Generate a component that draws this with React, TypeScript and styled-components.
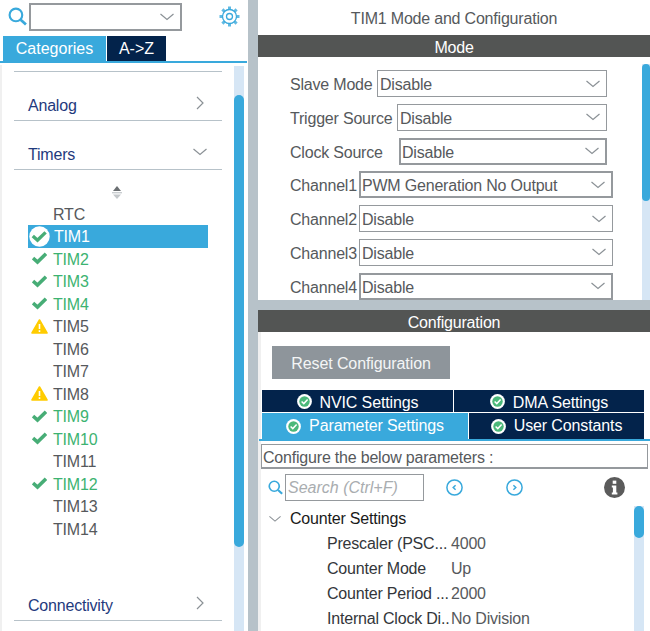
import styled, { createGlobalStyle } from 'styled-components';

const BLUE = '#39a9dc';
const NAVY = '#03234b';
const GREEN = '#3cb371';
const CHECK = '#47ad76';

const GlobalStyle = createGlobalStyle`
  html, body { margin: 0; padding: 0; background: #fff; }
  body {
    font-family: "Liberation Sans", Arial, sans-serif;
    font-size: 16px;
    letter-spacing: -0.2px;
    color: #56595c;
  }
`;

const timers = [
  { name: 'RTC' },
  { name: 'TIM1', status: 'selected' },
  { name: 'TIM2', status: 'ok' },
  { name: 'TIM3', status: 'ok' },
  { name: 'TIM4', status: 'ok' },
  { name: 'TIM5', status: 'warn' },
  { name: 'TIM6' },
  { name: 'TIM7' },
  { name: 'TIM8', status: 'warn' },
  { name: 'TIM9', status: 'ok' },
  { name: 'TIM10', status: 'ok' },
  { name: 'TIM11' },
  { name: 'TIM12', status: 'ok' },
  { name: 'TIM13' },
  { name: 'TIM14' },
];

const modes = [
  { label: 'Slave Mode', value: 'Disable', left: 377, right: 607 },
  { label: 'Trigger Source', value: 'Disable', left: 397, right: 607 },
  { label: 'Clock Source', value: 'Disable', left: 399, right: 607, heavy: true },
  { label: 'Channel1', value: 'PWM Generation No Output', left: 359, right: 613, heavy: true },
  { label: 'Channel2', value: 'Disable', left: 359, right: 613 },
  { label: 'Channel3', value: 'Disable', left: 359, right: 613 },
  { label: 'Channel4', value: 'Disable', left: 359, right: 613, heavy: true },
];

const params = [
  { label: 'Prescaler (PSC...', value: '4000' },
  { label: 'Counter Mode', value: 'Up' },
  { label: 'Counter Period ...', value: '2000' },
  { label: 'Internal Clock Di..', value: 'No Division' },
];

const Chevron = ({ dir = 'down', size = 14 }: { dir?: 'down' | 'right'; size?: number }) => (
  <svg width={size} height={size} viewBox="0 0 14 14" fill="none" stroke="#8b9196" strokeWidth="1.2">
    {dir === 'down' ? <path d="M0.5 4 7 9.5 13.5 4" /> : <path d="M4 1 10 7 4 13" />}
  </svg>
);

const SearchIcon = ({ size = 18 }: { size?: number }) => (
  <svg width={size} height={size} viewBox="0 0 18 18" fill="none" stroke={BLUE}>
    <circle cx="7.5" cy="7.5" r="6" strokeWidth="2" />
    <path d="M12 12 17 16.5" strokeWidth="2.6" />
  </svg>
);

const GearIcon = () => (
  <svg width="21" height="21" viewBox="0 0 21 21" fill="none" stroke={BLUE}>
    <circle cx="10.5" cy="10.5" r="7" strokeWidth="1.3" />
    <circle cx="10.5" cy="10.5" r="3" strokeWidth="1.3" />
    <path
      d="M10.5 0.5V3.5M10.5 17.5V20.5M0.5 10.5H3.5M17.5 10.5H20.5M3.4 3.4 5.5 5.5M15.5 15.5 17.6 17.6M17.6 3.4 15.5 5.5M5.5 15.5 3.4 17.6"
      strokeWidth="3"
      opacity="0.8"
    />
  </svg>
);

const CheckIcon = () => (
  <svg width="15" height="13" viewBox="0 0 15 13" fill="none" stroke={CHECK} strokeWidth="3.6">
    <path d="M1 6 5.5 10 14 1.8" />
  </svg>
);

const WarnIcon = () => (
  <svg width="17" height="15" viewBox="0 0 17 15">
    <path d="M8.5 1 16 14H1Z" fill="#ffcc00" stroke="#ffcc00" strokeWidth="1.6" strokeLinejoin="round" />
    <path d="M8.5 5V10M8.5 11.2V13" stroke="#fff" strokeWidth="1.6" />
  </svg>
);

const SelectedCheck = () => (
  <svg width="21" height="21" viewBox="0 0 21 21">
    <circle cx="10.5" cy="10.5" r="10.2" fill="#fff" />
    <path d="M3.8 10 8.5 14.2 16.6 6.4" fill="none" stroke={CHECK} strokeWidth="3.4" />
  </svg>
);

const TabCheck = () => (
  <svg width="15" height="15" viewBox="0 0 15 15">
    <circle cx="7.5" cy="7.5" r="7.4" fill="#fff" />
    <circle cx="7.5" cy="7.5" r="5.2" fill="#4bb87a" />
    <path d="M4.6 7.5 6.8 9.6 10.6 5.6" fill="none" stroke="#fff" strokeWidth="1.5" />
  </svg>
);

const CircleArrow = ({ dir }: { dir: 'left' | 'right' }) => (
  <svg width="17" height="17" viewBox="0 0 17 17" fill="none" stroke={BLUE}>
    <circle cx="8.5" cy="8.5" r="7.6" strokeWidth="1.5" />
    <path d={dir === 'left' ? 'M9.6 6.2 7.2 8.5 9.6 10.8' : 'M7.4 6.2 9.8 8.5 7.4 10.8'} strokeWidth="1.5" />
  </svg>
);

const InfoIcon = () => (
  <svg width="21" height="21" viewBox="0 0 21 21">
    <circle cx="10.5" cy="10.5" r="10.5" fill="#5b5b5b" />
    <rect x="8.7" y="3.6" width="3.6" height="3.2" fill="#fff" />
    <path d="M7.8 8.6H12.3V15.6H13.4V17.4H7.8V15.6H8.9V10.4H7.8Z" fill="#fff" />
  </svg>
);

const SortIcon = () => (
  <svg width="12" height="16" viewBox="0 0 12 16">
    <path d="M6 1 10 6H2Z" fill="#6b6f72" />
    <rect x="1" y="7" width="10" height="1.4" fill="#c9cdd0" />
    <path d="M6 14 10 9.6H2Z" fill="#c4c8cb" />
  </svg>
);

export default function App() {
  return (
    <Page>
      <GlobalStyle />
      <LeftPane>
        <SearchBar>
          <SearchIcon size={19} />
          <Combo>
            <Chevron />
          </Combo>
          <GearSlot>
            <GearIcon />
          </GearSlot>
        </SearchBar>
        <LeftTabs>
          <LeftTab $active>Categories</LeftTab>
          <LeftTab $wide={59}>A-&gt;Z</LeftTab>
        </LeftTabs>
        <TabRule />
        <LeftBody>
          <TreeColumn>
            <Category $first />
            <Category>
              Analog
              <Chevron dir="right" />
            </Category>
            <Category>
              Timers
              <Chevron />
            </Category>
            <SortRow>
              <SortIcon />
            </SortRow>
            <TimerList>
              {timers.map((t) => (
                <TimerRow key={t.name} $selected={t.status === 'selected'}>
                  <StatusSlot>
                    {t.status === 'selected' && <SelectedCheck />}
                    {t.status === 'ok' && <CheckIcon />}
                    {t.status === 'warn' && <WarnIcon />}
                  </StatusSlot>
                  <TimerName $status={t.status}>{t.name}</TimerName>
                </TimerRow>
              ))}
            </TimerList>
            <Category $last>
              Connectivity
              <Chevron dir="right" />
            </Category>
          </TreeColumn>
          <ScrollTrack $width={10} $gap={4} $offset={1}>
            <ScrollThumb $top={29} $height={452} />
          </ScrollTrack>
        </LeftBody>
      </LeftPane>

      <RightPane>
        <Title>TIM1 Mode and Configuration</Title>
        <DarkBar>Mode</DarkBar>
        <ModePanel>
          <ModeForm>
            {modes.map((m) => (
              <ModeRow key={m.label}>
                <ModeLabel $width={m.left - 290}>{m.label}</ModeLabel>
                <SelectBox $width={m.right - m.left} $heavy={m.heavy}>
                  <SelectText>{m.value}</SelectText>
                  <Chevron />
                </SelectBox>
              </ModeRow>
            ))}
          </ModeForm>
          <ScrollTrack $width={8} $gap={0} $offset={7}>
            <ScrollThumb $top={0} $height={137} />
          </ScrollTrack>
        </ModePanel>
        <Gutter />
        <DarkBar>Configuration</DarkBar>
        <ConfigPanel>
          <ResetButton>Reset Configuration</ResetButton>
          <ConfigTabRow $gapTop={11}>
            <ConfigTab $width={191} $height={22}>
              <TabCheck />
              <TabLabel $shift={4}>NVIC Settings</TabLabel>
            </ConfigTab>
            <ConfigTab $width={190} $height={22}>
              <TabCheck />
              <TabLabel $shift={4}>DMA Settings</TabLabel>
            </ConfigTab>
          </ConfigTabRow>
          <ConfigTabRow $gapTop={1}>
            <ConfigTab $width={206} $height={26} $active>
              <TabCheck />
              <TabLabel>Parameter Settings</TabLabel>
            </ConfigTab>
            <ConfigTab $width={175} $height={26}>
              <TabCheck />
              <TabLabel>User Constants</TabLabel>
            </ConfigTab>
          </ConfigTabRow>
          <ConfigRule />
          <HintBox>Configure the below parameters :</HintBox>
          <ToolRow>
            <SearchIcon size={15} />
            <SearchInput>Search (Ctrl+F)</SearchInput>
            <ToolIcon $width={37}>
              <CircleArrow dir="left" />
            </ToolIcon>
            <ToolIcon $width={58}>
              <CircleArrow dir="right" />
            </ToolIcon>
            <ToolIcon $width={100}>
              <InfoIcon />
            </ToolIcon>
          </ToolRow>
          <ParamBody>
            <ParamColumn>
              <GroupRow>
                <Chevron size={12} />
                Counter Settings
              </GroupRow>
              {params.map((p) => (
                <ParamRow key={p.label}>
                  <ParamName>{p.label}</ParamName>
                  <ParamValue>{p.value}</ParamValue>
                </ParamRow>
              ))}
            </ParamColumn>
            <ScrollTrack $width={10} $gap={6} $offset={5}>
              <ScrollThumb $top={0} $height={32} />
            </ScrollTrack>
          </ParamBody>
        </ConfigPanel>
      </RightPane>
    </Page>
  );
}

const Page = styled.div`
  display: flex;
  width: 650px;
  height: 631px;
  overflow: hidden;
  background: #fff;
`;

const LeftPane = styled.aside`
  width: 248px;
  flex: none;
  display: flex;
  flex-direction: column;
  overflow: hidden;
  border-right: 10px solid #b7c2c9;
`;

const SearchBar = styled.div`
  height: 36px;
  flex: none;
  box-sizing: border-box;
  display: flex;
  align-items: center;
  padding: 0 0 3px 8px;
  gap: 2px;
`;

const Combo = styled.div`
  width: 153px;
  height: 28px;
  box-sizing: border-box;
  border: 2px solid #95999d;
  display: flex;
  align-items: center;
  justify-content: flex-end;
  padding-right: 6px;
`;

const GearSlot = styled.div`
  margin-left: 35px;
  display: flex;
`;

const LeftTabs = styled.div`
  display: flex;
  padding-left: 3px;
  gap: 1px;
  height: 25px;
  flex: none;
`;

const LeftTab = styled.div<{ $active?: boolean; $wide?: number }>`
  width: ${({ $wide }) => ($wide ? `${$wide}px` : '103px')};
  background: ${({ $active }) => ($active ? BLUE : NAVY)};
  color: #fff;
  display: flex;
  align-items: center;
  justify-content: center;
  letter-spacing: 0;
`;

const TabRule = styled.div`
  height: 4px;
  flex: none;
  box-sizing: border-box;
  width: 247px;
  border-top: 2px solid ${BLUE};
`;

const LeftBody = styled.div`
  flex: 1;
  min-height: 0;
  display: flex;
  border-left: 2px solid #f0f0f0;
`;

const TreeColumn = styled.div`
  width: 232px;
  flex: none;
  display: flex;
  flex-direction: column;
`;

const Category = styled.div<{ $first?: boolean; $last?: boolean }>`
  height: ${({ $first }) => ($first ? '7px' : '49px')};
  margin: ${({ $last }) => ($last ? 'auto 12px 10px 12px' : '0 12px')};
  flex: none;
  border-bottom: 1px solid #b7c2c9;
  display: flex;
  align-items: center;
  justify-content: space-between;
  padding: 20px 15px 0 14px;
  box-sizing: border-box;
  color: #1f3a7d;
  ${({ $first }) => $first && 'padding: 0;'}

  svg {
    margin-bottom: 6px;
  }
`;

const SortRow = styled.div`
  height: 32.5px;
  flex: none;
  display: flex;
  justify-content: center;
  align-items: center;
  padding: 14px 3px 0 0;
  box-sizing: border-box;
`;

const TimerList = styled.ul`
  list-style: none;
  margin: 0;
  padding: 0 0 0 26px;
`;

const TimerRow = styled.li<{ $selected?: boolean }>`
  width: 180px;
  height: 22.5px;
  display: flex;
  align-items: center;
  background: ${({ $selected }) => ($selected ? BLUE : 'transparent')};
`;

const StatusSlot = styled.span`
  width: 22px;
  margin-right: 3px;
  flex: none;
  display: flex;
  justify-content: center;
`;

const TimerName = styled.span<{ $status?: string }>`
  color: ${({ $status }) => ($status === 'selected' ? '#fff' : $status === 'ok' ? GREEN : '#56595c')};
  margin-left: ${({ $status }) => ($status === 'selected' ? '1px' : '0')};
  padding-top: 2px;
`;

const ScrollTrack = styled.div<{ $width: number; $gap: number; $offset?: number }>`
  width: ${({ $width }) => $width}px;
  margin-right: ${({ $gap }) => $gap}px;
  margin-top: ${({ $offset }) => $offset ?? 0}px;
  flex: none;
  background: #d6e6f5;
  display: flex;
  flex-direction: column;
`;

const ScrollThumb = styled.div<{ $top: number; $height: number }>`
  margin-top: ${({ $top }) => $top}px;
  height: ${({ $height }) => $height}px;
  flex: none;
  background: ${BLUE};
  border-radius: 5px;
`;

const RightPane = styled.main`
  flex: 1;
  min-width: 0;
  display: flex;
  flex-direction: column;
`;

const Title = styled.div`
  height: 35px;
  box-sizing: border-box;
  padding-top: 2px;
  flex: none;
  display: flex;
  align-items: center;
  justify-content: center;
`;

const DarkBar = styled.div`
  height: 22px;
  box-sizing: border-box;
  padding-top: 4px;
  flex: none;
  background: #535554;
  color: #fff;
  display: flex;
  align-items: center;
  justify-content: center;
`;

const ModePanel = styled.section`
  height: 243px;
  flex: none;
  display: flex;
  justify-content: space-between;
  overflow: hidden;
`;

const ModeForm = styled.div`
  padding: 13px 0 0 32px;
  display: flex;
  flex-direction: column;
  gap: 6.8px;
`;

const ModeRow = styled.div`
  display: flex;
  align-items: center;
  height: 27px;
  flex: none;
`;

const ModeLabel = styled.span<{ $width: number }>`
  width: ${({ $width }) => $width}px;
  flex: none;
  padding-top: 3px;
`;

const SelectBox = styled.div<{ $width: number; $heavy?: boolean }>`
  width: ${({ $width }) => $width}px;
  height: 27px;
  box-sizing: border-box;
  border: ${({ $heavy }) => ($heavy ? '2px' : '1px')} solid #95999d;
  display: flex;
  align-items: center;
  justify-content: space-between;
  padding: 0 6px 0 ${({ $heavy }) => ($heavy ? '1px' : '2px')};
`;

const SelectText = styled.span`
  padding-top: 3px;
`;

const Gutter = styled.div`
  height: 10px;
  flex: none;
  background: #b7c2c9;
`;

const ConfigPanel = styled.section`
  flex: 1;
  min-height: 0;
  display: flex;
  flex-direction: column;
  border-left: 3px solid #f0f0f0;
`;

const ResetButton = styled.div`
  width: 178px;
  height: 33px;
  box-sizing: border-box;
  padding-top: 2px;
  margin: 14px 0 0 11px;
  flex: none;
  background: #8e959b;
  color: #f4f5f6;
  display: flex;
  align-items: center;
  justify-content: center;
  letter-spacing: -0.1px;
`;

const ConfigTabRow = styled.div<{ $gapTop: number }>`
  display: flex;
  gap: 1px;
  margin: ${({ $gapTop }) => $gapTop}px 0 0 1px;
  flex: none;
`;

const ConfigTab = styled.div<{ $width: number; $height: number; $active?: boolean }>`
  width: ${({ $width }) => $width}px;
  height: ${({ $height }) => $height}px;
  box-sizing: border-box;
  background: ${({ $active }) => ($active ? BLUE : NAVY)};
  color: #fff;
  display: flex;
  align-items: center;
  justify-content: center;
  gap: 8px;
  letter-spacing: -0.12px;
`;

const TabLabel = styled.span<{ $shift?: number }>`
  padding-top: ${({ $shift }) => $shift ?? 0}px;
`;

const ConfigRule = styled.div`
  height: 2px;
  margin-left: -2px;
  flex: none;
  background: ${BLUE};
`;

const HintBox = styled.div`
  margin: 3px 2px 0 0;
  height: 25px;
  flex: none;
  box-sizing: border-box;
  border: 1px solid #95999d;
  border-bottom-width: 2px;
  display: flex;
  align-items: center;
  padding: 4px 0 0 1px;
`;

const ToolRow = styled.div`
  height: 27px;
  margin-top: 5px;
  padding-left: 7px;
  flex: none;
  display: flex;
  align-items: center;
  gap: 2px;
`;

const SearchInput = styled.div`
  width: 139px;
  height: 27px;
  box-sizing: border-box;
  border: 1px solid #95999d;
  display: flex;
  align-items: center;
  padding-left: 2px;
  color: #a9adb0;
  font-style: italic;
  letter-spacing: 0;
`;

const ToolIcon = styled.div<{ $width: number }>`
  width: ${({ $width }) => $width}px;
  display: flex;
  justify-content: flex-end;
  flex: none;
`;

const ParamBody = styled.div`
  flex: 1;
  min-height: 0;
  display: flex;
  justify-content: space-between;
`;

const ParamColumn = styled.div`
  padding-top: 5px;
`;

const GroupRow = styled.div`
  height: 25px;
  display: flex;
  align-items: center;
  gap: 9px;
  padding-left: 8px;
  color: #1a1a1a;
`;

const ParamRow = styled.div`
  height: 25px;
  display: flex;
  align-items: center;
  padding-left: 66px;
`;

const ParamName = styled.span`
  width: 124px;
  flex: none;
  color: #33363a;
  white-space: nowrap;
`;

const ParamValue = styled.span`
  white-space: nowrap;
`;
